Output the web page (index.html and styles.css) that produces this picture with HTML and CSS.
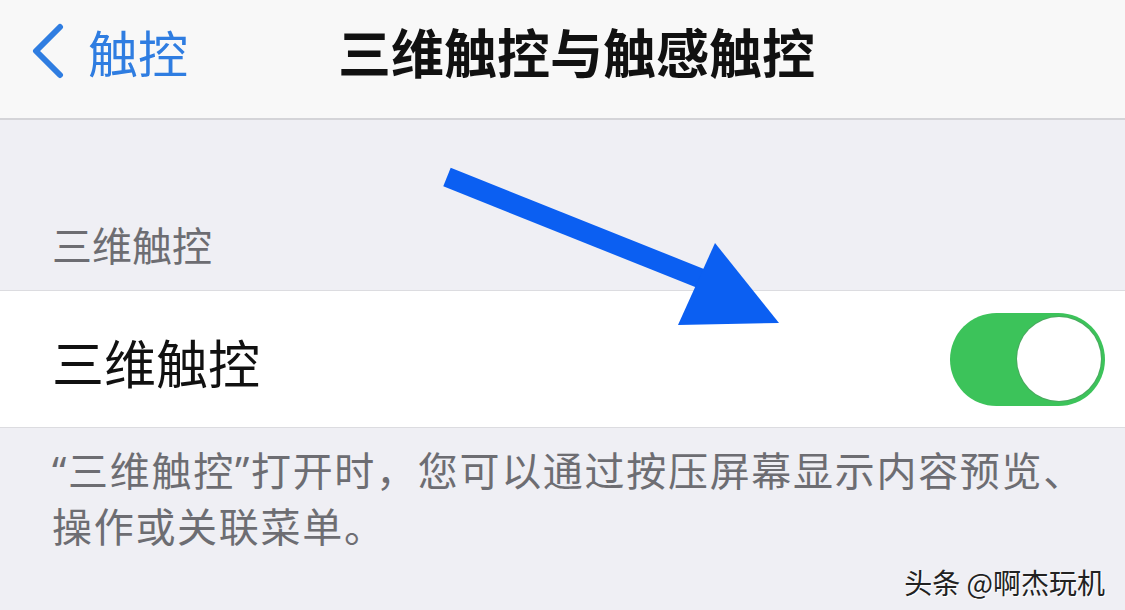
FILE: index.html
```html
<!DOCTYPE html>
<html lang="zh-CN">
<head>
    <meta charset="UTF-8">
    <meta name="viewport" content="width=device-width, initial-scale=1.0">
    <title>三维触控与触感触控</title>
    <link rel="stylesheet" href="styles.css">
</head>
<body>
    <header class="nav-bar">
        <a class="back-link" href="#">
            <svg class="back-chevron" width="40" height="56" viewBox="0 0 40 56">
                <polyline points="32,4 8,28 32,52" fill="none" stroke="#2f7de1" stroke-width="6" stroke-linecap="round" stroke-linejoin="round"/>
            </svg>
            <span>触控</span>
        </a>
        <h1 class="nav-title">三维触控与触感触控</h1>
    </header>

    <div class="section-header">三维触控</div>

    <div class="setting-row">
        <span class="row-label">三维触控</span>
        <div class="toggle">
            <div class="toggle-knob"></div>
        </div>
    </div>

    <p class="section-footer"><span class="quote">“</span>三维触控<span class="quote">”</span>打开时，您可以通过按压屏幕显示内容预览、<br>操作或关联菜单。</p>

    <div class="watermark">头条 @啊杰玩机</div>

    <!-- the annotation arrow drawn over the screenshot -->
    <svg class="annotation-arrow" width="1125" height="610" viewBox="0 0 1125 610">
        <line x1="447" y1="177" x2="712" y2="283" stroke="#0b5ff2" stroke-width="20"/>
        <polygon points="715,243 678,325 779,323" fill="#0b5ff2"/>
    </svg>
</body>
</html>
```

FILE: styles.css
```css
body {
    margin: 0;
    background-color: #efeff4;
    font-family: "Noto Sans CJK SC", "Noto Sans", sans-serif;
    position: relative;
    height: 610px;
    overflow: hidden;
}

.nav-bar {
    height: 120px;
    box-sizing: border-box;
    padding: 0 0 16px 28px;
    background-color: #f8f8f8;
    border-bottom: 2px solid #d4d4d8;
    display: flex;
    align-items: center;
}

.back-link {
    display: flex;
    align-items: center;
    gap: 20px;
    color: #2f7de1;
    text-decoration: none;
    font-size: 50px;
    line-height: 1;
}

.nav-title {
    margin: 0 0 0 150px;
    font-size: 53px;
    font-weight: 700;
    color: #111;
    line-height: 1;
}

.section-header {
    padding: 100px 0 0 52px;
    font-size: 40px;
    line-height: 48px;
    color: #6d6d72;
    height: 70px;
}

.setting-row {
    background-color: #fff;
    border-top: 1px solid #dcdce0;
    border-bottom: 1px solid #dcdce0;
    height: 136px;
    display: flex;
    align-items: center;
    justify-content: space-between;
    padding: 0 20px 0 52px;
}

.row-label {
    font-size: 52px;
    color: #111;
    margin-top: 4px;
}

.toggle {
    width: 155px;
    height: 93px;
    border-radius: 47px;
    background-color: #3cc35a;
    display: flex;
    justify-content: flex-end;
    align-items: center;
    padding: 0 4px;
    box-sizing: border-box;
}

.toggle-knob {
    width: 84px;
    height: 84px;
    border-radius: 50%;
    background-color: #fff;
    box-shadow: 0 0 0 1px #4aa95f;
}

.section-footer {
    margin: 0;
    padding: 14px 0 0 52px;
    font-size: 40px;
    line-height: 54px;
    letter-spacing: 1.7px;
    color: #6d6d72;
}

.quote {
    font-family: "Noto Sans", sans-serif;
}

.watermark {
    text-align: right;
    padding-right: 20px;
    margin-top: 10px;
    font-size: 28px;
    color: #222;
    text-shadow: 1px 1px 0 #fff;
}

.annotation-arrow {
    position: absolute;
    left: 0;
    top: 0;
    pointer-events: none;
}
```
